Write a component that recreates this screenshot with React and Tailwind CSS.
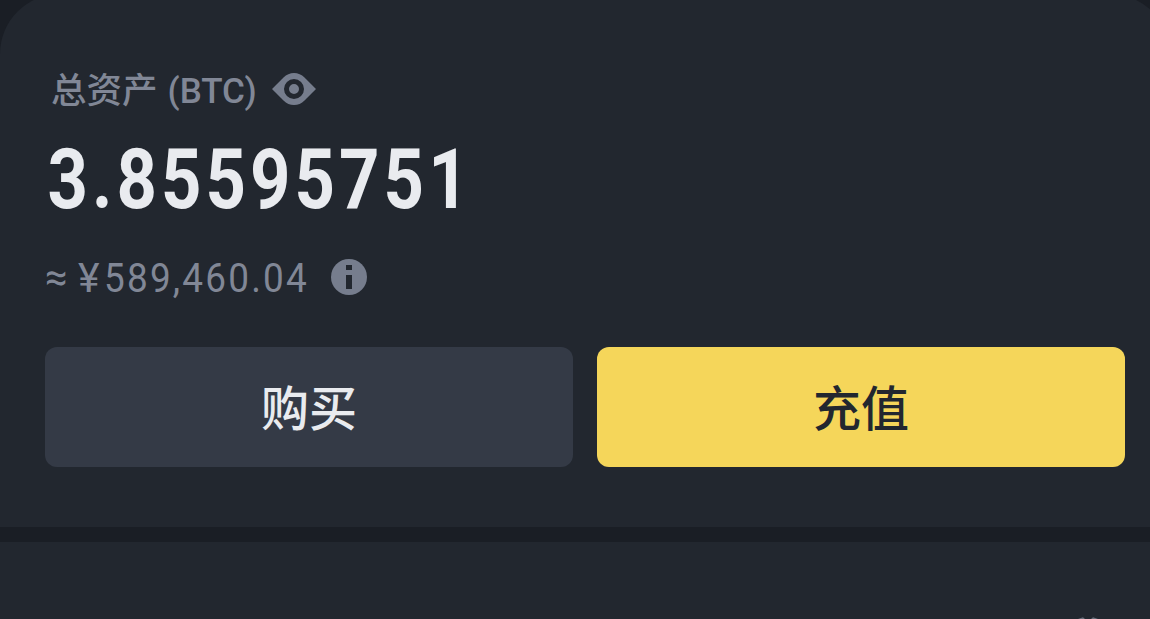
function EyeIcon() {
  return (
    <svg width="44" height="34" viewBox="0 0 44 34" className="mt-[72px] ml-[15px] shrink-0" fill="#767d8d">
      <path
        fillRule="evenodd"
        d="M0 17 L11.500 5.500 Q16 1 22 1 Q28 1 32.500 5.500 L44 17 L32.500 28.500 Q28 33 22 33 Q16 33 11.500 28.500 Z M22 7 A10 10 0 1 0 22 27 A10 10 0 1 0 22 7 Z M22 12 A5 5 0 1 1 22 22 A5 5 0 1 1 22 12 Z"
      />
    </svg>
  );
}

function InfoIcon() {
  return (
    <svg width="36" height="36" viewBox="0 0 36 36" className="mt-[8px] shrink-0">
      <circle cx="18" cy="18" r="18" fill="#767d8d" />
      <path d="M15 6h6v5h-6z M15 16h6v14h-6z" fill="#22272f" />
    </svg>
  );
}

export default function App() {
  return (
    <div className="flex h-[619px] w-full flex-col overflow-hidden bg-[#1a1e25] font-['Roboto','Noto_Sans_CJK_SC',sans-serif]">
      <section className="-mt-1.5 h-[533px] w-[1170px] shrink-0 rounded-t-[60px] bg-[#22272f] pl-[45px]">
        <div className="flex h-[132px] items-start pt-1.5 pl-1.5 text-[#818796]">
          <div className="mt-[63px] flex h-[50px] items-start font-medium whitespace-pre leading-[50px]">
            <span className="font-['Noto_Sans_CJK_SC',sans-serif] text-[35.500px]">总资产</span>
            <span className="ml-2.5 pt-1 text-[35px]">(BTC)</span>
          </div>
          <EyeIcon />
        </div>
        <div className="h-[100px] w-[560px] origin-left scale-x-[0.84] pt-1 pl-[3px] text-[84px] leading-[100px] font-bold tracking-[4.800px] text-[#e9ebef]">
          3.85595751
        </div>
        <div className="mt-[25px] flex h-[54px] items-start text-[41px] leading-[54px] text-[#818796]">
          <span className="w-[33px] text-[40px]">≈</span>
          <span className="w-[26px]">¥</span>
          <span className="w-[227px]">
            <span className="block w-[240px] origin-left scale-x-90 tracking-[2.450px]">589,460.04</span>
          </span>
          <InfoIcon />
        </div>
        <div className="mt-[42px] flex gap-6 font-['Noto_Sans_CJK_SC',sans-serif] text-[48px] font-medium">
          <button className="h-[120px] w-[528px] rounded-xl bg-[#343a46] pb-1 text-[#e9ebef]">购买</button>
          <button className="h-[120px] w-[528px] rounded-xl bg-[#f5d65a] pb-1 text-[#22272f]">充值</button>
        </div>
      </section>
      <section className="mt-[15px] flex flex-1 items-end justify-end bg-[#22272f] pr-[50px]">
        <svg width="22" height="2" viewBox="0 0 22 2" fill="#676d7a">
          <path d="M0 2 L5 0.300 L7 2 Z M13 2 L15 0.300 L20 2 Z" />
        </svg>
      </section>
    </div>
  );
}
